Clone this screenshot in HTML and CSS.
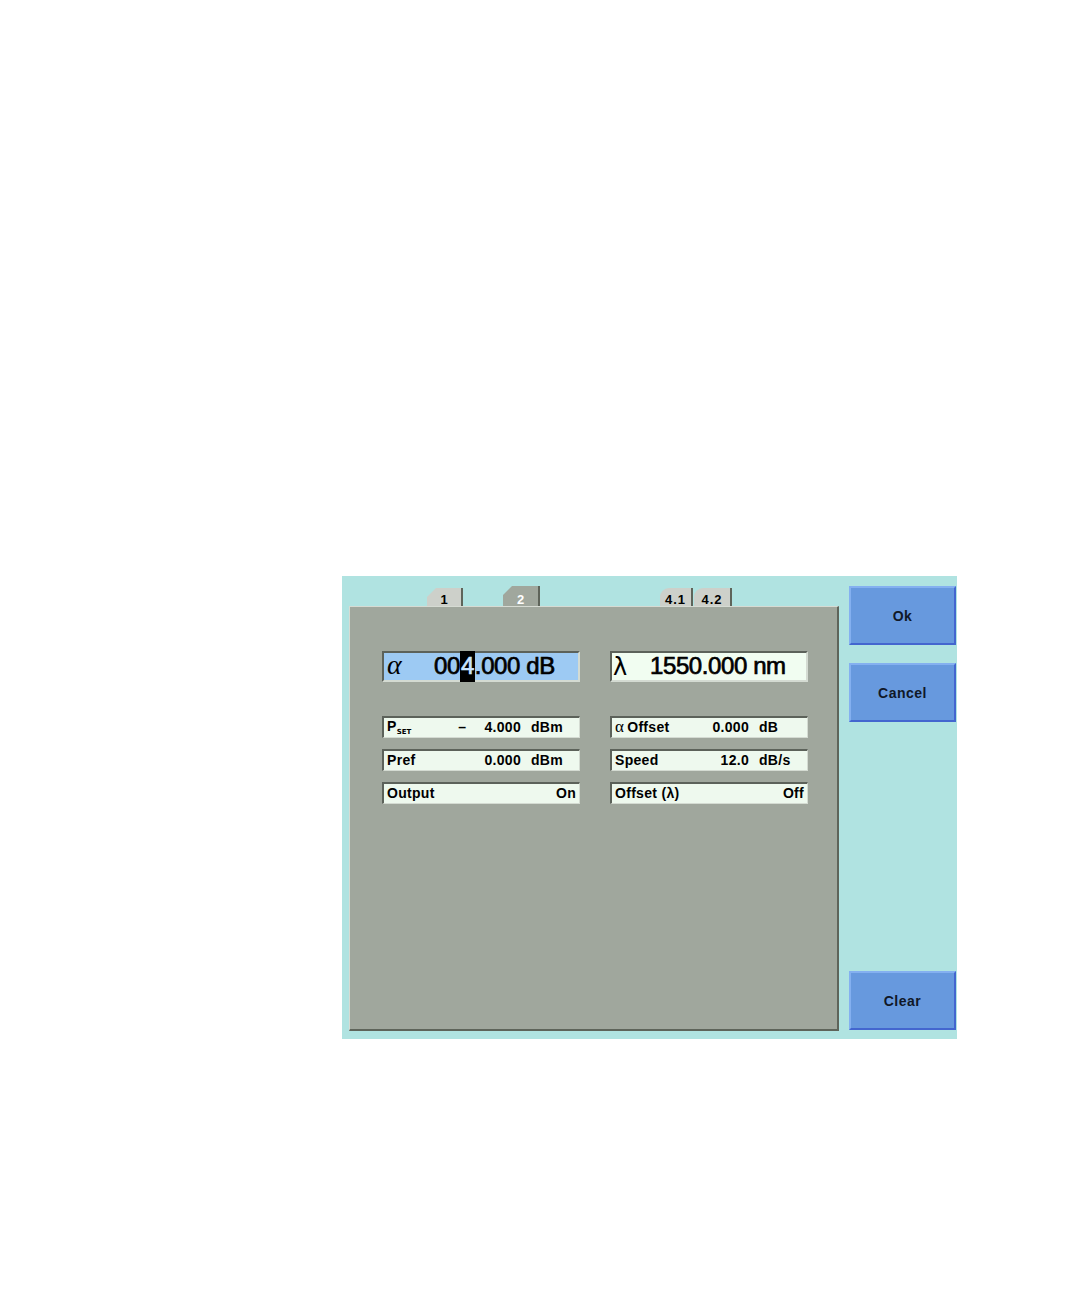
FILE: index.html
```html
<!DOCTYPE html>
<html>
<head>
<meta charset="utf-8">
<link rel="stylesheet" href="styles.css">
</head>
<body>
<div class="screen">
  <div class="left">
    <div class="tabs">
      <div class="tab tab1 chamfer">1</div>
      <div class="tab tab2 chamfer active">2</div>
      <div class="tab tab41 round">4.1</div>
      <div class="tab tab42 round">4.2</div>
    </div>
    <div class="panel">
      <div class="grid">
        <div class="big alpha"><span class="sym greek">α</span><span class="bigval">00<span class="cursor">4</span>.000 dB</span></div>
        <div class="big lambda"><span class="sym lam">λ</span><span class="bigval">1550.000 nm</span></div>

        <div class="field"><span class="lbl">P<sub>SET</sub></span><span class="dash">–</span><span class="val">4.000</span><span class="unit">dBm</span></div>
        <div class="field"><span class="lbl"><span class="ga">α</span>Offset</span><span class="val">0.000</span><span class="unit">dB</span></div>

        <div class="field"><span class="lbl">Pref</span><span class="val">0.000</span><span class="unit">dBm</span></div>
        <div class="field"><span class="lbl">Speed</span><span class="val">12.0</span><span class="unit">dB/s</span></div>

        <div class="field"><span class="lbl">Output</span><span class="end">On</span></div>
        <div class="field"><span class="lbl">Offset (λ)</span><span class="end">Off</span></div>
      </div>
    </div>
  </div>
  <div class="buttons">
    <div class="btn">Ok</div>
    <div class="btn">Cancel</div>
    <div class="spacer"></div>
    <div class="btn">Clear</div>
  </div>
</div>
</body>
</html>
```

FILE: styles.css
```css
html, body {
  margin: 0;
  padding: 0;
  background: #ffffff;
}
body {
  width: 1080px;
  height: 1296px;
  font-family: "DejaVu Sans", sans-serif;
}
.screen {
  margin: 576px 0 0 342px;
  width: 615px;
  height: 463px;
  box-sizing: border-box;
  background: #b0e3e1;
  display: flex;
  gap: 10px;
  padding: 0 1px 8px 7px;
}
.left {
  width: 490px;
  display: flex;
  flex-direction: column;
}
.tabs {
  height: 30px;
  display: flex;
  align-items: flex-end;
  flex-shrink: 0;
}
.tab {
  box-sizing: border-box;
  height: 18px;
  background: #cdd0ca;
  border-right: 2px solid #5e645a;
  font: bold 13px "Liberation Sans", sans-serif;
  line-height: 12px;
  color: #000;
  display: flex;
  align-items: flex-end;
  justify-content: center;
  padding-bottom: 0;
}
.chamfer {
  clip-path: polygon(9px 0, 100% 0, 100% 100%, 0 100%, 0 9px);
}
.round {
  border-top-left-radius: 9px;
}
.tab1 { width: 36px; margin-left: 78px; }
.tab2 { width: 37px; margin-left: 40px; height: 20px; background: #a0a79d; color: #fff; }
.tab41 { width: 33px; margin-left: 120px; letter-spacing: 1px; }
.tab42 { width: 38px; margin-left: 1px; letter-spacing: 1px; }
.panel {
  flex: 1;
  box-sizing: border-box;
  background: #a0a79d;
  border-top: 1px solid #d6dbd3;
  border-left: 1px solid #d6dbd3;
  border-right: 2px solid #5e645a;
  border-bottom: 2px solid #5e645a;
  padding: 44px 0 0 32px;
}
.grid {
  display: grid;
  grid-template-columns: 198px 198px;
  column-gap: 30px;
  row-gap: 11px;
}
.big {
  box-sizing: border-box;
  height: 31px;
  border-top: 2px solid #5c625a;
  border-left: 2px solid #5c625a;
  border-right: 2px solid #d4dbd2;
  border-bottom: 2px solid #d4dbd2;
  display: flex;
  align-items: center;
  margin-bottom: 23px;
  font: 24px "Liberation Sans", sans-serif;
  color: #000;
}
.alpha { background: #9dcaf3; }
.lambda { background: #f1fdf1; }
.sym { display: inline-block; }
.greek {
  font: italic 28px "Liberation Serif", serif;
  margin-left: 3px;
  width: 47px;
  line-height: 1;
  margin-top: -3px;
}
.lam {
  font: 24px "DejaVu Sans", sans-serif;
  margin-left: 1px;
  width: 37px;
}
.bigval {
  letter-spacing: -0.4px;
  line-height: 1;
  -webkit-text-stroke: 0.7px #000;
  margin-top: -2px;
}
.cursor {
  background: #000;
  color: #c8e4ff;
  -webkit-text-stroke: 0.7px #c8e4ff;
  display: inline-block;
  padding: 3px 1px 4px 1px;
  margin: -3px 0 -4px 0;
}
.field {
  box-sizing: border-box;
  height: 22px;
  background: #eef9ee;
  border-top: 2px solid #5c625a;
  border-left: 2px solid #5c625a;
  border-right: 1px solid #d4dbd2;
  border-bottom: 1px solid #d4dbd2;
  display: flex;
  align-items: center;
  padding: 0 3px 1px 3px;
  font: bold 14px "Liberation Sans", sans-serif;
  letter-spacing: 0.3px;
  color: #000;
  white-space: nowrap;
}
.lbl { flex: 1; }
.lbl sub {
  font: bold 7px "DejaVu Sans", sans-serif;
  vertical-align: -3px;
  letter-spacing: 0;
}
.ga {
  font: 17px "Liberation Serif", serif;
  margin-right: 3px;
}
.dash { margin-right: 18px; }
.val { text-align: right; }
.unit { width: 45px; margin-left: 10px; }
.end { text-align: right; }
.buttons {
  width: 107px;
  display: flex;
  flex-direction: column;
  padding-top: 10px;
  gap: 18px;
}
.btn {
  box-sizing: border-box;
  height: 59px;
  flex-shrink: 0;
  background: #6799de;
  border-top: 2px solid #84b0f0;
  border-left: 2px solid #84b0f0;
  border-right: 2px solid #4366cf;
  border-bottom: 2px solid #4366cf;
  display: flex;
  align-items: center;
  justify-content: center;
  font: bold 14px "Liberation Sans", sans-serif;
  letter-spacing: 0.5px;
  color: #101828;
}
.spacer { flex: 1; margin: -18px 0 -18px; }
.btn:last-child { margin-bottom: 1px; }
```
